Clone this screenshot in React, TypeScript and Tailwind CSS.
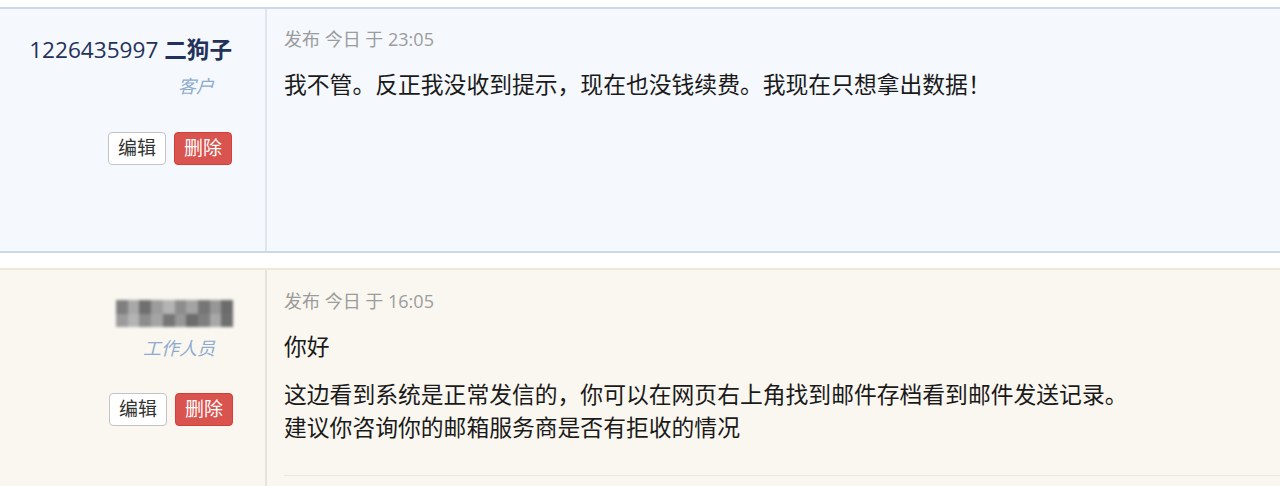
import React from 'react';

const font = { fontFamily: '"Open Sans", "Noto Sans CJK SC", sans-serif' };

function Actions() {
    return (
        <div className="flex gap-[8px]">
            <button className="h-[33px] w-[58px] rounded-[4px] border border-[#c4c4c4] bg-white text-[19px] leading-none text-[#333]">
                编辑
            </button>
            <button className="h-[33px] w-[58px] rounded-[4px] border border-[#d43f3a] bg-[#d9534f] text-[19px] leading-none text-white">
                删除
            </button>
        </div>
    );
}

function BlurredName() {
    const cells = ['#7f7f7f', '#a8a8a8', '#6f6f6f', '#9c9c9c', '#b4b4b4', '#8d8d8d', '#a4a4a4', '#767676', '#979797', '#6c6c6c'];
    return (
        <div className="flex h-[27px] w-[117px] overflow-hidden blur-[1.5px]">
            {cells.map((c, i) => (
                <div key={i} className="flex flex-1 flex-col">
                    <div className="h-1/2" style={{ background: c }} />
                    <div className="h-1/2" style={{ background: cells[(i + 3) % cells.length] }} />
                </div>
            ))}
        </div>
    );
}

export default function App() {
    return (
        <div className="min-h-[486px] bg-white pt-[7px]" style={font}>
            {/* customer post */}
            <div className="flex h-[246px] border-y-2 border-[#cbd8ea] bg-[#f5f8fc]">
                <div className="flex w-[267px] shrink-0 flex-col items-end border-r-2 border-[#dfe5ee] pr-[33px] pt-[26px]">
                    <div className="text-[22.6px] leading-[30px] text-[#23325a]">
                        1226435997 <span className="font-bold">二狗子</span>
                    </div>
                    <div className="mr-[18px] mt-[8px] text-[18px] italic leading-[26px] text-[#8eabcf]">客户</div>
                    <div className="mt-[33px]">
                        <Actions />
                    </div>
                </div>
                <div className="flex-1 pl-[17px] pt-[17px]">
                    <div className="text-[18px] leading-[26px] text-[#9c9c9c]">发布 今日 于 23:05</div>
                    <p className="mt-[16px] text-[22.8px] leading-[33px] text-[#1a1a1a]">
                        我不管。反正我没收到提示，现在也没钱续费。我现在只想拿出数据！
                    </p>
                </div>
            </div>

            <div className="h-[15px]" />

            {/* staff reply */}
            <div className="flex h-[220px] border-t-2 border-[#efe9d8] bg-[#faf7f0]">
                <div className="flex w-[267px] shrink-0 flex-col items-end border-r-2 border-[#e6e3dc] pr-[32px] pt-[30px]">
                    <BlurredName />
                    <div className="mr-[18px] mt-[8px] text-[18px] italic leading-[26px] text-[#8eabcf]">工作人员</div>
                    <div className="mt-[32px]">
                        <Actions />
                    </div>
                </div>
                <div className="flex-1 pl-[17px] pt-[18px]">
                    <div className="text-[18px] leading-[26px] text-[#9c9c9c]">发布 今日 于 16:05</div>
                    <p className="mt-[16px] text-[22.8px] leading-[33px] text-[#1a1a1a]">你好</p>
                    <p className="mt-[15px] text-[22.8px] leading-[33px] text-[#1a1a1a]">
                        这边看到系统是正常发信的，你可以在网页右上角找到邮件存档看到邮件发送记录。
                        <br />
                        建议你咨询你的邮箱服务商是否有拒收的情况
                    </p>
                    <div className="mt-[31px] border-t border-[#ece8df]" />
                </div>
            </div>
        </div>
    );
}
